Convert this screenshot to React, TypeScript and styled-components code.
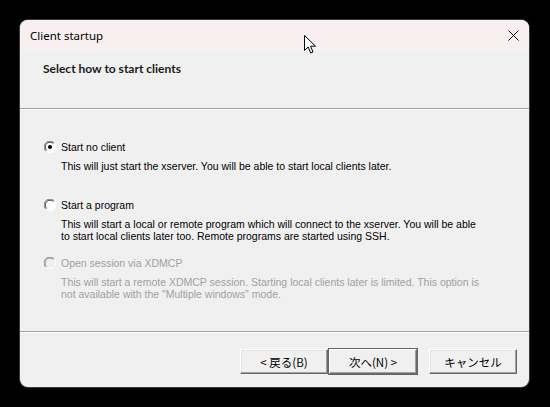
import styled, { createGlobalStyle } from 'styled-components';

const Global = createGlobalStyle`
  html, body {
    margin: 0;
    padding: 0;
    background: #000;
    width: 550px;
    height: 407px;
    overflow: hidden;
  }
`;

const Screen = styled.div`
  position: relative;
  width: 550px;
  height: 407px;
  padding: 20px 0 0 20px;
  box-sizing: border-box;
`;

const Dialog = styled.div`
  width: 509px;
  height: 367px;
  background: #f0f0f0;
  border-radius: 8px;
  overflow: hidden;
  display: flex;
  flex-direction: column;
  box-shadow: 0 0 0 1px #3a3a3a;
`;

const TitleBar = styled.div`
  height: 31px;
  flex: none;
  background: #f8f0f0;
  display: flex;
  align-items: center;
  justify-content: space-between;
  padding: 0 10px 0 10px;
  font-family: 'Noto Sans', 'Open Sans', sans-serif;
  font-size: 11.5px;
  color: #000;
`;

const CloseBtn = styled.div`
  width: 14px;
  height: 14px;
  display: flex;
  align-items: center;
  justify-content: center;
  margin-right: -1px;
`;

const Header = styled.div`
  height: 57px;
  flex: none;
  box-sizing: border-box;
  padding: 10px 0 0 23px;
  font-family: Lato, 'Noto Sans', sans-serif;
  font-weight: 700;
  font-size: 12px;
  line-height: 16px;
  color: #1a1a1a;
`;

const Separator = styled.div`
  flex: none;
  height: 1px;
  background: #a0a0a0;
  border-bottom: 1px solid #ffffff;
`;

const Body = styled.div`
  flex: 1;
  box-sizing: border-box;
  padding: 31px 0 0 24px;
  display: grid;
  grid-auto-rows: 58px;
  font-family: 'Liberation Sans', Arial, sans-serif;
  font-size: 10.5px;
  color: #000;
`;

const Option = styled.div<{ disabled?: boolean }>`
  display: grid;
  grid-template-columns: 12px 1fr;
  column-gap: 5px;
  row-gap: 8px;
  align-content: start;
  color: ${({ disabled }) => (disabled ? '#a0a0a0' : '#000')};
`;

const Label = styled.div`
  height: 12px;
  line-height: 12px;
`;

const Desc = styled.div`
  grid-column: 2;
  line-height: 11.5px;
`;

const Footer = styled.div`
  height: 54px;
  flex: none;
  box-sizing: border-box;
  padding: 16px 12px 0 0;
  display: flex;
  justify-content: flex-end;
`;

const Button = styled.button<{ $default?: boolean; $gap?: number }>`
  width: 88px;
  height: 25px;
  margin-left: ${({ $gap }) => $gap ?? 0}px;
  box-sizing: border-box;
  background: #f0f0f0;
  border: 1px solid;
  border-color: #ffffff #696969 #696969 #ffffff;
  box-shadow: ${({ $default }) =>
    $default
      ? '0 0 0 1px #646464, inset -1px -1px 0 #a0a0a0'
      : 'inset -1px -1px 0 #a0a0a0, inset 1px 1px 0 #e3e3e3'};
  font-family: 'Noto Sans CJK JP', 'Noto Sans', sans-serif;
  font-size: 11.5px;
  color: #000;
  padding: 0;
  display: flex;
  align-items: center;
  justify-content: center;
`;

const Cursor = styled.svg`
  position: absolute;
  left: 304px;
  top: 35px;
`;

function Radio({ checked, disabled }: { checked?: boolean; disabled?: boolean }) {
  return (
    <svg width="12" height="12" viewBox="0 0 12 12">
      <circle cx="6" cy="6" r="5.5" fill={disabled ? '#f0f0f0' : '#ffffff'} />
      <path d="M1.8 10.2 A5.5 5.5 0 0 1 10.2 1.8" fill="none" stroke="#808080" strokeWidth="1" />
      <path d="M2.6 9.4 A4.5 4.5 0 0 1 9.4 2.6" fill="none" stroke={disabled ? '#a0a0a0' : '#404040'} strokeWidth="1" />
      <path d="M10.2 1.8 A5.5 5.5 0 0 1 1.8 10.2" fill="none" stroke="#ffffff" strokeWidth="1" />
      {checked && <circle cx="6" cy="6" r="2" fill="#000" />}
    </svg>
  );
}

export default function App() {
  return (
    <>
      <Global />
      <Screen>
        <Dialog>
          <TitleBar>
            <span>Client startup</span>
            <CloseBtn>
              <svg width="11" height="11" viewBox="0 0 11 11">
                <path d="M0.5 0.5 L10.5 10.5 M10.5 0.5 L0.5 10.5" stroke="#000" strokeWidth="1" />
              </svg>
            </CloseBtn>
          </TitleBar>
          <Header>Select how to start clients</Header>
          <Separator />
          <Body>
            <Option>
              <Radio checked />
              <Label>Start no client</Label>
              <Desc>This will just start the xserver. You will be able to start local clients later.</Desc>
            </Option>
            <Option>
              <Radio />
              <Label>Start a program</Label>
              <Desc>
                This will start a local or remote program which will connect to the xserver. You will be able
                <br />
                to start local clients later too. Remote programs are started using SSH.
              </Desc>
            </Option>
            <Option disabled>
              <Radio disabled />
              <Label>Open session via XDMCP</Label>
              <Desc>
                This will start a remote XDMCP session. Starting local clients later is limited. This option is
                <br />
                not available with the "Multiple windows" mode.
              </Desc>
            </Option>
          </Body>
          <Separator />
          <Footer>
            <Button>&lt; 戻る(B)</Button>
            <Button $default $gap={1}>次へ(N) &gt;</Button>
            <Button $gap={12}>キャンセル</Button>
          </Footer>
        </Dialog>
        <Cursor width="13" height="20" viewBox="0 0 13 20">
          <path
            d="M0.5 0.5 L0.5 15.5 L4.2 12 L6.7 18 L9 17 L6.6 11.2 L11.5 11.2 Z"
            fill="#fff"
            stroke="#000"
            strokeWidth="1"
            strokeLinejoin="round"
          />
        </Cursor>
      </Screen>
    </>
  );
}
